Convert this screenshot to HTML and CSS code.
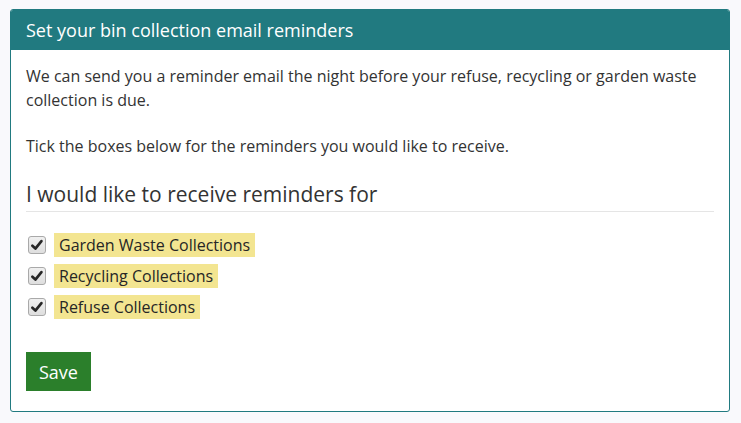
FILE: index.html
```html
<!DOCTYPE html>
<html>
<head>
<meta charset="utf-8">
<link rel="stylesheet" href="styles.css">
</head>
<body>
<div class="panel">
  <div class="panel-heading">Set your bin collection email reminders</div>
  <div class="panel-body">
    <p class="intro">We can send you a reminder email the night before your refuse, recycling or garden waste collection is due.</p>
    <p class="intro tick">Tick the boxes below for the reminders you would like to receive.</p>
    <h3 class="legend">I would like to receive reminders for</h3>
    <div class="options">
      <label class="option"><span class="box"><svg viewBox="0 0 18 18" width="18" height="18"><path d="M3.8 9.8 L7.2 13 L14 4.6" fill="none" stroke="#262626" stroke-width="3" stroke-linecap="round" stroke-linejoin="round"/></svg></span><span class="tag">Garden Waste Collections</span></label>
      <label class="option"><span class="box"><svg viewBox="0 0 18 18" width="18" height="18"><path d="M3.8 9.8 L7.2 13 L14 4.6" fill="none" stroke="#262626" stroke-width="3" stroke-linecap="round" stroke-linejoin="round"/></svg></span><span class="tag">Recycling Collections</span></label>
      <label class="option"><span class="box"><svg viewBox="0 0 18 18" width="18" height="18"><path d="M3.8 9.8 L7.2 13 L14 4.6" fill="none" stroke="#262626" stroke-width="3" stroke-linecap="round" stroke-linejoin="round"/></svg></span><span class="tag">Refuse Collections</span></label>
    </div>
    <button class="save" type="button">Save</button>
  </div>
</div>
</body>
</html>
```
FILE: styles.css
```css
html, body {
  margin: 0;
  padding: 0;
  background: #f9f9fc;
}
body {
  padding: 9px 11px 0 10px;
  font-family: "Open Sans", "Liberation Sans", sans-serif;
  color: #333;
}
.panel {
  border: 1px solid #217a80;
  border-radius: 3px;
  background: #fff;
  box-sizing: border-box;
  height: 403px;
}
.panel-heading {
  background: #217a80;
  color: #fff;
  font-size: 18px;
  line-height: 24px;
  padding: 8px 15px 8px 15px;
  border-radius: 2px 2px 0 0;
}
.panel-body {
  padding: 14px 15px 19px 15px;
}
.intro {
  margin: 0;
  font-size: 16px;
  line-height: 24px;
}
.tick {
  margin-top: 22px;
}
.legend {
  font-weight: 400;
  font-size: 21px;
  line-height: 28px;
  margin: 22px 0 0 0;
  padding-bottom: 3px;
  border-bottom: 1px solid #e5e5e5;
}
.options {
  display: flex;
  flex-direction: column;
  gap: 7px;
  margin-top: 21px;
}
.option {
  display: flex;
  align-items: center;
  font-size: 16px;
}
.box {
  width: 18px;
  height: 18px;
  box-sizing: border-box;
  border: 1px solid #a9a9a9;
  border-radius: 3px;
  background: linear-gradient(#f0f0f0, #dedede);
  margin: 0 8px 0 2px;
  display: flex;
  align-items: center;
  justify-content: center;
}
.box svg {
  width: 16px;
  height: 16px;
}
.tag {
  background: #f3e591;
  font-weight: 500;
  line-height: 24px;
  padding: 0 5px;
  color: #262626;
}
.save {
  margin-top: 33px;
  background: #2b7f2b;
  color: #fff;
  border: none;
  font-family: "Open Sans", "Liberation Sans", sans-serif;
  font-size: 18px;
  width: 65px;
  height: 39px;
  padding: 0;
}
```
